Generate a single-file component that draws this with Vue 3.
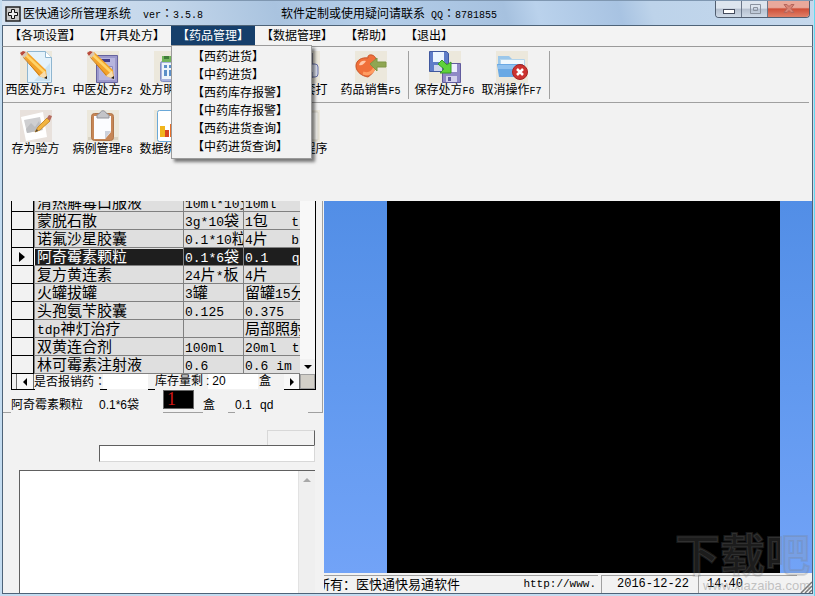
<script setup>
import { h, ref } from 'vue'

// Splits a string so that half-width text and colons get their own face beside the CJK glyphs.
const Mixed = (props) =>
  h(
    'span',
    { class: 'mixed' },
    props.text
      .split(/([\x20-\x7e]+|：)/)
      .filter(Boolean)
      .map((t) => h('span', { class: t === '：' ? 'colon' : /^[\x20-\x7e]/.test(t) ? 'half' : 'full' }, t)),
  )
Mixed.props = ['text']

const menus = ['【各项设置】', '【开具处方】', '【药品管理】', '【数据管理】', '【帮助】', '【退出】']
const active = 2
const dropdown = ['【西药进货】', '【中药进货】', '【西药库存报警】', '【中药库存报警】', '【西药进货查询】', '【中药进货查询】']

const bars = [
  [
    { icon: 'page', text: '西医处方F1' },
    { icon: 'book', text: '中医处方F2' },
    { icon: 'calc', text: '处方明细F3' },
    { gap: true },
    { icon: 'print', text: '处方套打' },
    { icon: 'sale', text: '药品销售F5' },
    { line: true },
    { icon: 'save', text: '保存处方F6' },
    { icon: 'cancel', text: '取消操作F7' },
    { line: true },
  ],
  [
    { icon: 'note', text: '存为验方' },
    { icon: 'clip', text: '病例管理F8' },
    { icon: 'chart', text: '数据统计F9' },
    { gap: true },
    { icon: 'exit', text: '退出程序' },
  ],
]

const rows = [
  ['清热解毒口服液', '10ml*10支', '10ml'],
  ['蒙脱石散', '3g*10袋', '1包   t'],
  ['诺氟沙星胶囊', '0.1*10粒', '4片   b'],
  ['阿奇霉素颗粒', '0.1*6袋', '0.1   qd'],
  ['复方黄连素', '24片*板', '4片'],
  ['火罐拔罐', '3罐', '留罐15分'],
  ['头孢氨苄胶囊', '0.125', '0.375'],
  ['tdp神灯治疗', '', '局部照射'],
  ['双黄连合剂', '100ml', '20ml  t'],
  ['林可霉素注射液', '0.6', '0.6 im'],
]
const selected = 3
const amount = ref('1')
</script>

<template>
  <div class="window">
    <header class="title">
      <svg class="logo" viewBox="0 0 16 16" aria-hidden="true">
        <rect x="1" y="1" width="14" height="14" fill="#c9c9c9" stroke="#222" stroke-width="1.5" />
        <path d="M6.5 3.5h3v3h3v3h-3v3h-3v-3h-3v-3h3z" fill="#eee" stroke="#111" />
      </svg>
      <Mixed text="医快通诊所管理系统  ver：3.5.8" />
      <Mixed class="contact" text="软件定制或使用疑问请联系 QQ：8781855" />
      <div class="controls">
        <button class="ctl" aria-label="最小化">
          <svg viewBox="0 0 24 16"><rect x="6.500" y="8.500" width="11" height="4" fill="#fff" stroke="#444b5c" /></svg>
        </button>
        <button class="ctl" aria-label="最大化">
          <svg viewBox="0 0 24 16"><path d="M7.500 3.500h10v9h-10zM10.500 6.500h4v3h-4z" fill="none" stroke="#8a929e" /></svg>
        </button>
        <button class="ctl close" aria-label="关闭">
          <svg viewBox="0 0 24 16"><path d="M7 3.500h3l2 2 2-2h3l-3 4 3 4h-3l-2-2-2 2h-3l3-4z" fill="#d98475" stroke="#b5665c" /></svg>
        </button>
      </div>
    </header>

    <nav class="menubar">
      <div v-for="(m, i) in menus" :key="m" class="menu">
        <button class="menu-btn" :class="{ on: i === active }">{{ m }}</button>
        <div v-if="i === active" class="drop">
          <button v-for="d in dropdown" :key="d" class="drop-item">{{ d }}</button>
        </div>
      </div>
    </nav>

    <div v-for="(bar, b) in bars" :key="b" class="toolbar" :class="{ last: b === 1 }">
      <template v-for="(t, i) in bar" :key="i">
        <div v-if="t.line" class="sep"></div>
        <div v-else-if="t.gap" class="tool"></div>
        <button v-else class="tool">
          <svg class="ico" viewBox="0 0 32 32" aria-hidden="true">
            <rect width="32" height="32" fill="#ece8dc" />
            <g v-if="t.icon === 'page'">
              <path d="M7.500 0.500h18l6 6v25h-24z" fill="#e4f2fb" stroke="#8fb6d0" />
              <path d="M25.500 0.500v6h6" fill="#fff" stroke="#8fb6d0" />
              <path d="M14 30h16V12z" fill="#cbe3f3" />
            </g>
            <g v-if="t.icon === 'book'">
              <path d="M9.500 4.500h21v27h-21z" fill="#9c99cc" stroke="#66639e" />
              <path d="M12 7h16v22H12z" fill="#b7b5de" />
              <path d="M14 8h9v3h-9z" fill="#443f8c" />
              <path d="M20.500 15.500h5v6h-5z" fill="#d0cfec" stroke="#8c89c0" />
            </g>
            <g v-if="t.icon === 'page' || t.icon === 'book'">
              <path d="M3 5l4-4 19 18 1 9-8-3z" fill="#f3a32b" />
              <path d="M6 4l19 18" stroke="#ffd469" stroke-width="2.500" />
              <path d="M3 6l17 19" stroke="#c97a14" />
              <path d="M0 2l3-2 3 1-4 4z" fill="#b94a3c" />
              <path d="M2 5l4-4 2 2-4 4z" fill="#d9c8b4" />
              <path d="M19 25l6-5 2 8z" fill="#f7ddb0" />
              <path d="M24 27l3-2v3z" fill="#222" />
            </g>
            <g v-if="t.icon === 'calc'">
              <rect x="6.500" y="10.500" width="25" height="20" rx="2" fill="#a9b3de" stroke="#7f8cc2" />
              <path d="M8 5h22v6H8z" fill="#72b35b" />
              <path d="M10 5h5v3h-5z" fill="#3f7d39" />
              <path d="M8 12h21v16H8z" fill="#eef4fb" />
              <path d="M10 14h3v3h-3zM15 14h3v3h-3zM10 19h3v6h-3zM15 19h3v6h-3z" fill="#5b8fc8" />
            </g>
            <g v-if="t.icon === 'print'">
              <path d="M5 2h20v12H5z" fill="#8d8d9c" />
              <rect x="1" y="13" width="29" height="13" rx="3" fill="#dfe3f1" stroke="#6771a8" />
              <path d="M6 21h18v6H6z" fill="#fff" stroke="#6771a8" />
            </g>
            <g v-if="t.icon === 'sale'">
              <path d="M13 7C12 3 18 3 20 6c3 5 1 15-7 20C7 25 1 21 1 15 1 9 7 6 13 7z" fill="#f0703a" stroke="#c9562b" />
              <path d="M4 14c1-4 4-5 7-4-2 3-4 5-7 4z" fill="#ffc8a8" />
              <path d="M8 22c6 2 10-1 12-6" fill="none" stroke="#ff9d62" stroke-width="3" />
              <path d="M15 13l7-6v4h9v5h-9v4z" fill="#8fa652" stroke="#7d9645" />
            </g>
            <g v-if="t.icon === 'save'">
              <path d="M0.500 0.500h17l2 2v18h-19z" fill="#5f7cc8" stroke="#40589e" />
              <path d="M4 1h11v10H4z" fill="#edf5ff" />
              <path d="M5 14h10v6H5z" fill="#cfd6ee" />
              <path d="M13.500 12.500h18v19h-18z" fill="#8f89c6" stroke="#625c9e" />
              <path d="M18 13h10v8H18z" fill="#eef" />
              <path d="M17 25h11v6H17z" fill="#d3d0ec" />
              <path d="M19 26h3v4h-3z" fill="#625c9e" />
              <path d="M9 13l4-4 5 5 4-3v11H11l4-4z" fill="#5fd23b" stroke="#3a9b2a" />
            </g>
            <g v-if="t.icon === 'cancel'">
              <path d="M2 5h11l3 3h11v5H2z" fill="#9bc7ea" />
              <path d="M4.500 8.500h24v8h-24z" fill="#f0f8fd" stroke="#b4d5ec" />
              <path d="M1 13h26l-2 13H3z" fill="#6aa9e4" />
              <path d="M2 14h24v4H2z" fill="#8fc1ef" />
              <circle cx="24" cy="21" r="7.500" fill="#cc3330" stroke="#a52422" />
              <path d="M21 18l6 6M27 18l-6 6" stroke="#fff" stroke-width="2.500" />
            </g>
            <g v-if="t.icon === 'note'">
              <rect width="32" height="32" fill="#e8e1dc" />
              <path d="M1 7l22-5 4 25-21 4z" fill="#fff" />
              <path d="M4 10l16-3 3 13-16 3z" fill="#cfcfd1" />
              <path d="M6 19l5-6 4 4 4-6 3 9-15 3z" fill="#bcbdc0" />
              <path d="M15 22l3-5 9-9 3 3-10 9z" fill="#f2b441" stroke="#cb8d2c" />
              <path d="M27 8l2-3 3 1-2 5z" fill="#b56a5e" />
              <path d="M15 22l2-3 1 2z" fill="#444" />
            </g>
            <g v-if="t.icon === 'clip'">
              <path d="M1 27h30v3H1z" fill="#d9d3c4" />
              <rect x="4.500" y="3.500" width="22" height="27" rx="3" fill="#c68656" stroke="#b07548" />
              <path d="M7 6h17v16l-6 7H7z" fill="#fbfcff" />
              <path d="M24 21h-6v8z" fill="#ccd1dc" />
              <path d="M10 8V5l3-2c1-3 5-3 6 0l3 2v3z" fill="#c3c4c8" stroke="#92939a" />
            </g>
            <g v-if="t.icon === 'chart'">
              <rect x="3.500" y="0.500" width="27" height="31" rx="2" fill="#fff" stroke="#6aa8d8" />
              <path d="M6 16h5v11H6z" fill="#f1b51c" />
              <path d="M11 20h4v7h-4z" fill="#d8441f" />
              <path d="M16 14h4v13h-4z" fill="#e8702a" />
            </g>
            <g v-if="t.icon === 'exit'"><path d="M3 2h27v28H3z" fill="#f4f3ee" stroke="#d8d5c8" /></g>
          </svg>
          <Mixed :text="t.text" />
        </button>
      </template>
    </div>

    <main class="body">
      <section class="left">
        <div class="group">
          <div class="frame">
            <div class="grid">
              <div class="rows">
                <table>
                  <colgroup><col class="c0" /><col class="c1" /><col class="c2" /><col class="c3" /></colgroup>
                  <tbody>
                    <tr v-for="(r, i) in rows" :key="i" :class="{ sel: i === selected }">
                      <th scope="row"><svg v-if="i === selected" viewBox="0 0 6 10"><path d="M0 0l6 5-6 5z" /></svg></th>
                      <td v-for="(c, k) in r" :key="k"><Mixed :text="c" /></td>
                    </tr>
                  </tbody>
                </table>
              </div>
              <div class="vscroll">
                <button aria-label="向下"><svg viewBox="0 0 8 4"><path d="M0 0h8L4 4z" /></svg></button>
              </div>
            </div>
            <div class="strip">
              <button class="arrow" aria-label="向左"><svg viewBox="0 0 4 8"><path d="M4 0v8L0 4z" /></svg></button>
              <label class="claim" for="claim"><Mixed text="是否报销药：" /></label>
              <input id="claim" class="blank" />
              <span class="stock"><Mixed text="库存量剩" /><span>:</span><span class="qty">20</span></span>
              <span class="unit">盒</span>
              <button class="arrow right" aria-label="向右"><svg viewBox="0 0 4 8"><path d="M0 0v8l4-4z" /></svg></button>
              <span class="corner"></span>
            </div>
          </div>
          <div class="detail">
            <span class="drug">阿奇霉素颗粒</span>
            <span class="spec">0.1*6袋</span>
            <input v-model="amount" class="amount" aria-label="数量" />
            <span class="dunit">盒</span>
            <span class="dose">0.1</span>
            <span>qd</span>
          </div>
        </div>
        <div class="form">
          <button class="plain" aria-label="查找"></button>
          <input class="line" aria-label="名称" />
          <div class="memo">
            <textarea aria-label="备注"></textarea>
            <div class="memo-scroll"><svg viewBox="0 0 8 4"><path d="M0 4h8L4 0z" /></svg></div>
          </div>
        </div>
      </section>

      <section class="right">
        <div class="stage"><div class="screen"></div></div>
        <footer class="status">
          <div class="cell info">
            <span class="owner">所有：医快通快易通软件</span>
            <span class="url">http://www.</span>
          </div>
          <div class="cell date">2016-12-22</div>
          <div class="cell time">14:40</div>
          <svg class="grip" viewBox="0 0 12 12" aria-hidden="true"><path d="M1 12L12 1M5 12l7-7M9 12l3-3" stroke="#777" stroke-width="1.500" /></svg>
        </footer>
      </section>
    </main>

    <div class="mark" aria-hidden="true"><b>下载吧</b><i>www.xiazaiba.com</i></div>
  </div>
</template>

<style>
body {
  margin: 0;
  overflow: hidden;
}
.half {
  font-family: 'Liberation Mono', monospace;
  font-size: 10px;
}
.colon {
  font-family: 'Noto Sans CJK TC', sans-serif;
}
.mixed {
  white-space: pre;
}
</style>

<style scoped>
* {
  box-sizing: border-box;
}
.window {
  position: relative;
  display: flex;
  flex-direction: column;
  height: 100vh;
  padding: 0 2px 2px;
  overflow: hidden;
  background: linear-gradient(270deg, #62d8ee 1px, #c4dcf0 1px);
  color: #000;
  font: 12px/16px 'Liberation Sans', 'Noto Sans CJK SC', sans-serif;
}
button,
input,
textarea {
  margin: 0;
  padding: 0;
  border: 0;
  border-radius: 0;
  outline: 0;
  background: none;
  color: inherit;
  font: inherit;
}
svg {
  display: block;
}
.title {
  display: flex;
  align-items: center;
  flex: none;
  height: 25px;
  padding: 2px 3px 0;
  border-top: 1px solid #7f97b1;
  background: linear-gradient(75deg, #d6e3f1 0%, #c4d7eb 20%, #a9c3df 34%, #b4cee9 45%, #a6c1df 62%, #bad2ec 66%, #a8c3e2 76%, #bdd3ea 80%, #c5d8ec 100%);
}
.logo {
  width: 16px;
  height: 16px;
  margin-right: 2px;
}
.contact {
  margin-left: 78px;
}
.controls {
  display: flex;
  align-self: flex-start;
  margin: -2px 0 0 auto;
  border: 1px solid #515e70;
  border-top: 0;
  border-radius: 0 0 4px 4px;
  overflow: hidden;
}
.ctl {
  display: flex;
  justify-content: center;
  width: 26px;
  height: 16px;
  border-right: 1px solid #6a778a;
  background: linear-gradient(#dde5ee 45%, #b4bfce 50%, #cfdae7);
}
.ctl svg {
  width: 24px;
  height: 16px;
}
.ctl.close {
  width: 41px;
  border: 0;
  background: linear-gradient(#e9a99b 40%, #cf4f38 50%, #e08068);
}
.menubar {
  display: flex;
  flex: none;
  height: 22px;
  border: 1px solid #4e6378;
  border-bottom-color: #9a9a9a;
  background: #f3f3f3;
}
.menu {
  position: relative;
}
.menu-btn {
  display: block;
  height: 19px;
  padding: 0 6px;
  white-space: nowrap;
}
.menu-btn.on {
  background: #163f6b;
  color: #fff;
}
.drop {
  position: absolute;
  z-index: 5;
  top: 19px;
  left: 0;
  width: 141px;
  padding: 2px 0;
  border: 1px solid #9b9b9b;
  background: #f2f2f2;
  box-shadow: 3px 3px 3px rgba(0, 0, 0, 0.5);
}
.drop-item {
  display: block;
  width: 100%;
  height: 18px;
  padding-left: 20px;
  text-align: left;
  white-space: nowrap;
}
.toolbar {
  display: flex;
  flex: none;
  height: 56px;
  padding-top: 4px;
  border: solid #4e6378;
  border-width: 0 1px;
  background: linear-gradient(#a0a0a0, #a0a0a0) 0 100% / calc(100% - 3px) 1px no-repeat #f2f2f2;
}
.toolbar.last {
  height: 98px;
  padding-top: 7px;
  background: #f2f2f2;
}
.tool {
  display: flex;
  flex-direction: column;
  align-items: center;
  flex: none;
  width: 67px;
  padding-right: 2px;
  line-height: 14px;
}
.ico {
  width: 32px;
  height: 32px;
}
.sep {
  flex: none;
  width: 1px;
  height: 48px;
  margin: 0 3px;
  background: #a0a0a0;
}
.body {
  display: flex;
  flex: 1;
  min-height: 0;
  border: solid #4e6378;
  border-width: 0 1px 1px;
  background: #f2f2f2;
}
.left {
  display: flex;
  flex-direction: column;
  flex: none;
  width: 321px;
}
.group {
  width: 320px;
  padding-left: 8px;
  border-right: 1px solid #a0a0a0;
  background: linear-gradient(90deg, #a0a0a0 8px, transparent 8px 160px, #a0a0a0 160px 200px, transparent 200px 225px, #a0a0a0 225px 232px, transparent 232px 305px, #a0a0a0 305px) 0 100% / 100% 1px no-repeat;
}
.frame {
  width: 305px;
  padding-bottom: 1px;
  border: solid #000;
  border-width: 0 1px;
  background: linear-gradient(90deg, #000 23px, transparent 23px 88px, #000 88px 95px, transparent 95px 136px, #000 136px 143px, transparent 143px 272px, #000 272px) 0 100% / 100% 1px no-repeat;
}
.grid {
  display: flex;
  height: 173px;
}
.rows {
  display: flex;
  flex-direction: column;
  justify-content: flex-end;
  flex: 1;
  min-width: 0;
  overflow: hidden;
}
table {
  width: 100%;
  table-layout: fixed;
  border-collapse: separate;
  border-spacing: 0;
  font-size: 15px;
  line-height: 17px;
}
.c0 {
  width: 22px;
}
.c1 {
  width: 149px;
}
.c2 {
  width: 60px;
}
.c3 {
  width: 57px;
}
th {
  height: 18px;
  padding: 0 0 0 7px;
  border: solid #000;
  border-width: 0 1px 1px 0;
}
th svg {
  width: 6px;
  height: 10px;
}
td {
  height: 18px;
  padding: 0 0 0 1px;
  overflow: hidden;
  border: solid #808080;
  border-width: 0 0 1px 1px;
  background: #dfdfdf;
}
td:nth-child(2) {
  padding-left: 2px;
}
td .mixed {
  display: block;
  height: 17px;
  overflow: hidden;
}
td :deep(.half) {
  font-size: 13px;
}
.sel td {
  background: #1e1e1e;
  color: #fff;
}
.sel td:nth-child(2) {
  border-top: 1px solid #e0e0e0;
  border-left-color: #fff;
  line-height: 16px;
}
.sel td:nth-child(2) .mixed {
  height: 16px;
}
.vscroll {
  display: flex;
  flex-direction: column;
  justify-content: flex-end;
  width: 15px;
  background: #f8f8f8;
}
.vscroll button {
  display: flex;
  align-items: center;
  justify-content: center;
  height: 15px;
  background: #f2f2f2;
}
.vscroll svg {
  width: 8px;
  height: 4px;
}
.strip {
  display: flex;
  align-items: center;
  height: 15px;
  padding-left: 4px;
  line-height: 15px;
}
.arrow {
  display: flex;
  align-items: center;
  justify-content: center;
  width: 18px;
  height: 15px;
  border: solid #707070;
  border-width: 0 1px 0 1px;
  background: #f8f8f8;
}
.arrow svg {
  width: 4px;
  height: 8px;
}
.claim {
  width: 69px;
  overflow: hidden;
  white-space: nowrap;
}
.blank {
  width: 45px;
  height: 15px;
  background: #fff;
}
.stock {
  display: flex;
  gap: 3px;
  width: 110px;
  padding-left: 7px;
  background: linear-gradient(90deg, transparent 60px, #fff 60px);
}
.unit {
  width: 26px;
  padding-left: 1px;
}
.arrow.right {
  width: 15px;
  margin-left: auto;
  border-width: 0 1px 0 0;
}
.corner {
  width: 15px;
  height: 15px;
  border: 1px solid #a0a0a0;
  background: #d2cfc8;
}
.detail {
  display: flex;
  align-items: center;
  height: 23px;
  padding-bottom: 4px;
  line-height: 18px;
}
.detail span {
  padding-top: 10px;
}
.drug {
  width: 88px;
}
.spec {
  width: 64px;
}
.amount {
  width: 31px;
  height: 19px;
  padding-left: 3px;
  border: 1px solid #666;
  background: #000;
  color: #d01818;
  font: 18px/17px 'Liberation Serif', serif;
}
.dunit {
  width: 32px;
  padding-left: 9px;
}
.dose {
  width: 34px;
  padding-left: 9px;
}
.form {
  display: flex;
  flex-direction: column;
  flex: 1;
  min-height: 0;
  padding: 17px 9px 0 16px;
}
.plain {
  align-self: flex-end;
  width: 48px;
  height: 15px;
  border: solid #d8d8d8;
  border-width: 1px 0 0 1px;
  border-right: 1px solid #606060;
}
.line {
  align-self: flex-end;
  width: 216px;
  height: 17px;
  border: 1px solid #d8d8d8;
  border-top-color: #606060;
  border-left-color: #606060;
  background: #fff;
}
.memo {
  display: flex;
  flex: 1;
  min-height: 0;
  margin-top: 8px;
  border: solid #606060;
  border-width: 1px 0 0 1px;
  background: #fff;
}
.memo textarea {
  flex: 1;
  min-width: 0;
  resize: none;
}
.memo-scroll {
  width: 17px;
  padding: 7px 4px;
  border-left: 1px solid #e2e2e2;
  background: #efefef;
  fill: #a8a8a8;
}
.memo-scroll svg {
  width: 8px;
  height: 4px;
}
.right {
  display: flex;
  flex-direction: column;
  flex: 1;
  min-width: 0;
}
.stage {
  display: flex;
  flex: 1;
  padding: 0 32px 0 63px;
  background: linear-gradient(#528ee6, #6199ef 50%, #72a3f7);
}
.screen {
  flex: 1;
  background: #000;
}
.status {
  display: flex;
  gap: 3px;
  flex: none;
  height: 20px;
  padding-top: 2px;
}
.cell {
  border: solid #a0a0a0;
  border-width: 1px 0 0 1px;
  line-height: 17px;
  white-space: nowrap;
  overflow: hidden;
}
.info {
  display: flex;
  justify-content: space-between;
  flex: 1;
  border-left: 0;
}
.owner {
  margin-left: -7px;
  font-size: 13px;
}
.url {
  padding-right: 2px;
  font-family: 'Liberation Mono', monospace;
  font-size: 11px;
}
.date {
  width: 94px;
  padding-left: 15px;
  font-family: 'Liberation Mono', monospace;
}
.time {
  width: 99px;
  padding-left: 8px;
  font-family: 'Liberation Mono', monospace;
}
.grip {
  align-self: flex-end;
  width: 12px;
  height: 12px;
}
.mark {
  position: absolute;
  right: 5px;
  bottom: 3px;
  display: flex;
  flex-direction: column;
  align-items: flex-end;
  pointer-events: none;
}
.mark b {
  color: rgba(150, 150, 150, 0.2);
  font-size: 45px;
  line-height: 44px;
  -webkit-text-stroke: 2px rgba(120, 120, 120, 0.22);
}
.mark i {
  color: rgba(150, 150, 150, 0.55);
  font-style: normal;
  font-size: 13px;
  line-height: 14px;
}
</style>
